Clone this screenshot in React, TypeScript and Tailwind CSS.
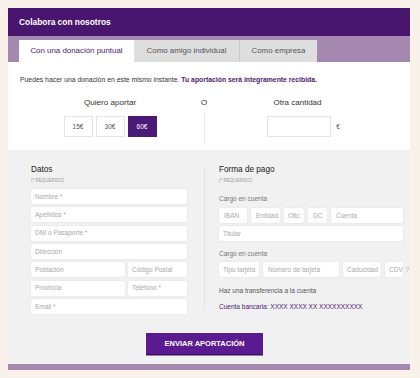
import React from "react";

const font = { fontFamily: '"Liberation Sans", Arial, sans-serif' };

function Field({ label, className = "" }: { label: string; className?: string }) {
  return (
    <div
      className={`h-[15px] bg-white rounded-[2px] flex items-center px-[4px] whitespace-nowrap overflow-hidden text-[6.5px] text-[#a8a8a8] shadow-[0_0_0_0.5px_#e6e6e6] ${className}`}
    >
      {label}
    </div>
  );
}

export default function App() {
  return (
    <div className="w-[420px] h-[378px] bg-[#f9f2ea] pt-[8px] pl-[8px]" style={font}>
      <div className="w-[402px]">
        {/* header */}
        <div className="h-[28px] bg-[#48166f] flex items-center pl-[11px] text-white text-[8.4px] font-bold">
          Colabora con nosotros
        </div>

        {/* tabs */}
        <div className="h-[26px] bg-[#a488b0] flex items-end pl-[11px]">
          <div className="h-[22px] w-[115px] bg-white flex items-center justify-center text-[7.9px] text-[#4a1a72]">
            Con una donación puntual
          </div>
          <div className="h-[22px] w-[106px] bg-[#dedede] border-r border-[#c9c9c9] flex items-center justify-center text-[7.9px] text-[#555]">
            Como amigo individual
          </div>
          <div className="h-[22px] w-[77px] bg-[#dedede] flex items-center justify-center text-[7.9px] text-[#555]">
            Como empresa
          </div>
        </div>

        {/* amount */}
        <div className="h-[88px] bg-white pt-[14px]">
          <p className="pl-[12px] text-[6.85px] leading-[8px] text-[#333]">
            Puedes hacer una donación en este mismo instante.{" "}
            <span className="font-bold text-[#4a1a72]">Tu aportación será integramente recibida.</span>
          </p>
          <div className="flex mt-[14px]">
            <div className="w-[191px] pl-[13px] flex flex-col items-center">
              <p className="text-[8.1px] leading-[10px] text-[#333]">Quiero aportar</p>
              <div className="flex gap-[3px] mt-[8px]">
                <div className="w-[29px] h-[21px] border border-[#e4e4e4] flex items-center justify-center text-[6.5px] text-[#555]">15€</div>
                <div className="w-[29px] h-[21px] border border-[#e4e4e4] flex items-center justify-center text-[6.5px] text-[#555]">30€</div>
                <div className="w-[29px] h-[21px] bg-[#4b1a78] flex items-center justify-center text-[6.5px] text-white">60€</div>
              </div>
            </div>
            <div className="flex flex-col items-center w-[10px]">
              <p className="text-[8px] leading-[10px] text-[#333]">O</p>
              <div className="w-px flex-1 bg-[#ececec] mt-[4px] mb-[-8px]" />
            </div>
            <div className="flex-1 flex flex-col items-center pr-[24px]">
              <p className="text-[8px] leading-[10px] text-[#333]">Otra cantidad</p>
              <div className="flex items-center mt-[8px] pl-[12px]">
                <div className="w-[64px] h-[21px] border border-[#e4e4e4] bg-white" />
                <span className="text-[6.5px] text-[#555] ml-[5px]">€</span>
              </div>
            </div>
          </div>
        </div>

        {/* form */}
        <div className="h-[214px] bg-[#f1f1f1] pl-[23px] pt-[15px]">
          <div className="flex items-start">
            <div className="w-[156px]">
              <p className="text-[8.2px] leading-[10px] text-[#222]">Datos</p>
              <p className="text-[4.5px] leading-[5px] text-[#999] mt-[2.5px]">(* REQUERIDO)</p>
              <div className="flex flex-col gap-[3.33px] mt-[6.5px]">
                <Field label="Nombre *" />
                <Field label="Apellidos *" />
                <Field label="DNI o Pasaporte *" />
                <Field label="Dirección" />
                <div className="flex gap-[3px]">
                  <Field label="Población" className="w-[94px]" />
                  <Field label="Código Postal" className="flex-1" />
                </div>
                <div className="flex gap-[3px]">
                  <Field label="Provincia" className="w-[94px]" />
                  <Field label="Teléfono  *" className="flex-1" />
                </div>
                <Field label="Email *" />
              </div>
            </div>
            <div className="w-px bg-[#e2e2e2] ml-[17px] mt-[3px] h-[142px]" />
            <div className="w-[184px] ml-[14px]">
              <p className="text-[8.2px] leading-[10px] text-[#222]">Forma de pago</p>
              <p className="text-[4.5px] leading-[5px] text-[#999] mt-[2.5px]">(* REQUERIDO)</p>
              <p className="text-[6.5px] leading-[8px] text-[#777] mt-[12.5px]">Cargo en cuenta</p>
              <div className="flex gap-[4px] mt-[5px]">
                <Field label="IBAN" className="w-[28px] px-[5px]" />
                <Field label="Entidad" className="w-[29px] px-[5px]" />
                <Field label="Ofic." className="w-[20px]" />
                <Field label="DC" className="w-[19px] px-[5px]" />
                <Field label="Cuenta" className="flex-1 px-[5px]" />
              </div>
              <Field label="Titular" className="mt-[3px]" />
              <p className="text-[6.5px] leading-[8px] text-[#777] mt-[9px]">Cargo en cuenta</p>
              <div className="flex gap-[4px] mt-[4px] relative">
                <Field label="Tipo tarjeta" className="w-[40px] text-[6.3px]" />
                <Field label="Número de tarjeta" className="w-[76px] text-[6.3px] px-[5px]" />
                <Field label="Caducidad" className="w-[38px] text-[6.3px]" />
                <Field label="CDV" className="flex-1 text-[6.3px]" />
                <span className="absolute right-[-6px] top-[3px] text-[6.5px] text-[#aaa]">?</span>
              </div>
              <p className="text-[6.5px] leading-[8px] text-[#555] mt-[10px]">Haz una transferencia a la cuenta</p>
              <p className="text-[6.5px] leading-[8px] text-[#4a1a72] mt-[8px]">Cuenta bancaria: XXXX XXXX XX XXXXXXXXXX</p>
            </div>
          </div>
          <div className="flex mt-[19px] pl-[115px]">
            <div className="w-[117px] h-[21px] bg-[#5a1a90] shadow-[0_1.5px_0_#3a0f60] flex items-center justify-center text-white text-[7.5px] font-bold">
              ENVIAR APORTACIÓN
            </div>
          </div>
        </div>
        <div className="h-[6px] bg-[#a488b0]" />
      </div>
    </div>
  );
}
